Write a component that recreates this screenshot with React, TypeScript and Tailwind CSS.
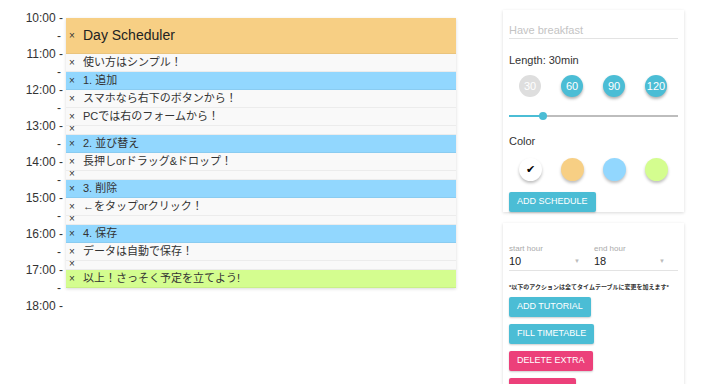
import React from "react";

type Row = { label: string; color?: string; h: number; big?: boolean };

const rows: Row[] = [
  { label: "Day Scheduler", color: "bg-[#f7cf84]", h: 36, big: true },
  { label: "使い方はシンプル！", h: 18 },
  { label: "1. 追加", color: "bg-[#92d7fe]", h: 18 },
  { label: "スマホなら右下のボタンから！", h: 18 },
  { label: "PCでは右のフォームから！", h: 18 },
  { label: "", h: 9 },
  { label: "2. 並び替え", color: "bg-[#92d7fe]", h: 18 },
  { label: "長押しorドラッグ&ドロップ！", h: 18 },
  { label: "", h: 9 },
  { label: "3. 削除", color: "bg-[#92d7fe]", h: 18 },
  { label: "←をタップorクリック！", h: 18 },
  { label: "", h: 9 },
  { label: "4. 保存", color: "bg-[#92d7fe]", h: 18 },
  { label: "データは自動で保存！", h: 18 },
  { label: "", h: 9 },
  { label: "以上！さっそく予定を立てよう!", color: "bg-[#d4fd8f]", h: 18 },
];

const hours = ["10:00", "11:00", "12:00", "13:00", "14:00", "15:00", "16:00", "17:00", "18:00"];

function TimeAxis() {
  const slots: string[] = [];
  hours.forEach((h, i) => {
    slots.push(`${h} -`);
    if (i < hours.length - 1) slots.push("-");
  });
  return (
    <div className="w-[66px] pt-[9px] pr-[3px] flex flex-col items-end">
      {slots.map((s, i) => (
        <div key={i} className={`h-[18px] leading-[18px] text-[12px] text-[#333] ${s === "-" ? "pr-[2px]" : ""}`}>
          {s}
        </div>
      ))}
    </div>
  );
}

function ScheduleList() {
  return (
    <div className="mt-[18px] w-[390px] self-start shadow-[0_1px_3px_rgba(0,0,0,0.15)]">
      {rows.map((r, i) => (
        <div
          key={i}
          style={{ height: r.h }}
          className={`flex items-center border-b ${r.color ? `${r.color} border-[#0000000d]` : "bg-[#f9f9f9] border-[#ececec]"}`}
        >
          <span className={`w-[17px] pl-[3px] text-[#333] text-[10px] ${r.h === 9 ? "leading-[9px] -mt-[3px]" : ""}`}>×</span>
          <span className={r.big ? "text-[14px] text-[#222]" : "text-[11px] text-[#333]"}>{r.label}</span>
        </div>
      ))}
    </div>
  );
}

function Circle({ n, active }: { n: string; active: boolean }) {
  return (
    <div
      className={`w-[22px] h-[22px] rounded-full flex items-center justify-center text-[11px] text-white ${
        active ? "bg-[#4bbdd5] shadow-[0_2px_3px_rgba(0,0,0,0.3)]" : "bg-[#dedede]"
      }`}
    >
      {n}
    </div>
  );
}

function Swatch({ color, checked }: { color: string; checked?: boolean }) {
  return (
    <div className={`w-[23px] h-[23px] rounded-full flex items-center justify-center text-[11px] shadow-[0_2px_3px_rgba(0,0,0,0.25)] ${color}`}>
      {checked ? "✔" : ""}
    </div>
  );
}

function Btn({ children, pink, w }: { children?: React.ReactNode; pink?: boolean; w?: string }) {
  return (
    <div
      className={`h-[20px] px-[8px] flex items-center text-white text-[9px] rounded-[2px] shadow-[0_1px_2px_rgba(0,0,0,0.2)] ${
        pink ? "bg-[#ec407a]" : "bg-[#4bbdd5]"
      } ${w ?? ""}`}
    >
      {children}
    </div>
  );
}

function AddCard() {
  return (
    <div className="w-[181px] h-[208px] bg-white shadow-[0_1px_3px_rgba(0,0,0,0.15)] px-[6px] pt-[14px] flex flex-col">
      <div className="h-[15px] leading-[13px] text-[11px] text-[#c4c4c4] border-b border-[#e3e3e3]">Have breakfast</div>
      <div className="mt-[15px] leading-[13px] text-[11px] text-[#333]">Length: 30min</div>
      <div className="mt-[8px] flex gap-[20px] pl-[10px]">
        <Circle n="30" active={false} />
        <Circle n="60" active />
        <Circle n="90" active />
        <Circle n="120" active />
      </div>
      <div className="mt-[15px] h-[8px] flex items-center">
        <div className="w-[34px] h-[1.5px] bg-[#4bbdd5]" />
        <div className="w-[8px] h-[8px] rounded-full bg-[#4bbdd5] -mx-[4px] relative" />
        <div className="flex-1 h-[1.5px] bg-[#bdbdbd]" />
      </div>
      <div className="mt-[15px] leading-[13px] text-[11px] text-[#333]">Color</div>
      <div className="mt-[10px] flex gap-[19px] pl-[10px]">
        <Swatch color="bg-white" checked />
        <Swatch color="bg-[#f7cf84]" />
        <Swatch color="bg-[#92d7fe]" />
        <Swatch color="bg-[#d4fd8f]" />
      </div>
      <div className="mt-[11px] flex">
        <Btn>ADD SCHEDULE</Btn>
      </div>
    </div>
  );
}

function SettingsCard() {
  return (
    <div className="mt-[11px] w-[181px] h-[170px] bg-white shadow-[0_1px_3px_rgba(0,0,0,0.15)] px-[6px] pt-[21px] flex flex-col">
      <div className="flex border-b border-[#e3e3e3] pb-[2px]">
        <div className="w-[85px] flex flex-col">
          <span className="text-[8px] text-[#aaa] leading-[10px]">start hour</span>
          <div className="flex items-center justify-between pr-[14px] mt-[1px] leading-[13px]">
            <span className="text-[11px] text-[#222]">10</span>
            <span className="text-[6px] text-[#bbb]">▼</span>
          </div>
        </div>
        <div className="flex-1 flex flex-col">
          <span className="text-[8px] text-[#aaa] leading-[10px]">end hour</span>
          <div className="flex items-center justify-between pr-[13px] mt-[1px] leading-[13px]">
            <span className="text-[11px] text-[#222]">18</span>
            <span className="text-[6px] text-[#bbb]">▼</span>
          </div>
        </div>
      </div>
      <div className="mt-[12px] text-[6px] font-bold text-[#333] leading-[8px]">*以下のアクションは全てタイムテーブルに変更を加えます*</div>
      <div className="mt-[6px] flex flex-col items-start gap-[7px]">
        <Btn>ADD TUTORIAL</Btn>
        <Btn>FILL TIMETABLE</Btn>
        <Btn pink>DELETE EXTRA</Btn>
        <Btn pink w="w-[67px]" />
      </div>
    </div>
  );
}

export default function App() {
  return (
    <div className="w-[720px] h-[384px] overflow-hidden bg-white flex font-['Liberation_Sans','Noto_Sans_CJK_JP',sans-serif]">
      <TimeAxis />
      <ScheduleList />
      <div className="ml-[47px] pt-[10px] flex flex-col">
        <AddCard />
        <SettingsCard />
      </div>
    </div>
  );
}
